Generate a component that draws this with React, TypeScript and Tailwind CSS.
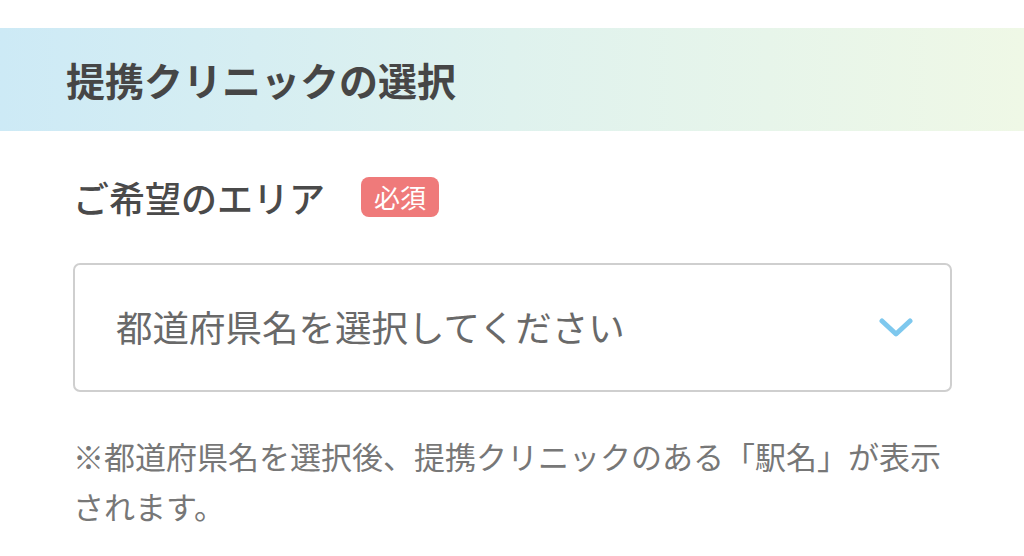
import React from "react";

export default function App() {
  return (
    <div
      className="w-[1024px] h-[556px] bg-white overflow-hidden"
      style={{ fontFamily: '"Noto Sans CJK JP", "Noto Sans", sans-serif' }}
    >
      <div className="mt-[28px] h-[103px] flex items-center pl-[66px] bg-gradient-to-r from-[#cdeaf6] via-[#dff2ee] to-[#eff8e6]">
        <h2 className="text-[39px] leading-none font-bold text-[#464646] tracking-[0px]">
          提携クリニックの選択
        </h2>
      </div>
      <div className="pl-[73px] pr-[72px]">
        <div className="mt-[46px] flex items-center h-[40px]">
          <span className="text-[36px] leading-none font-medium text-[#4a4a4a]">
            ご希望のエリア
          </span>
          <span className="ml-[36px] h-[40px] w-[78px] rounded-[8px] bg-[#ef7a7a] text-white text-[26px] leading-none flex items-center justify-center">
            必須
          </span>
        </div>
        <div className="mt-[46px] h-[129px] border-2 border-[#cfcfcf] rounded-[7px] flex items-center justify-between pl-[41px] pr-[37px]">
          <span className="text-[36.5px] leading-none text-[#696969]">
            都道府県名を選択してください
          </span>
          <svg width="34" height="22" viewBox="0 0 34 22" fill="none">
            <polyline
              points="3,4 17,17 31,4"
              stroke="#7ec8ee"
              strokeWidth="5"
              strokeLinecap="round"
              strokeLinejoin="round"
            />
          </svg>
        </div>
        <p className="mt-[39px] text-[31px] leading-[50px] text-[#777777]">
          ※都道府県名を選択後、提携クリニックのある「駅名」が表示されます。
        </p>
      </div>
    </div>
  );
}
